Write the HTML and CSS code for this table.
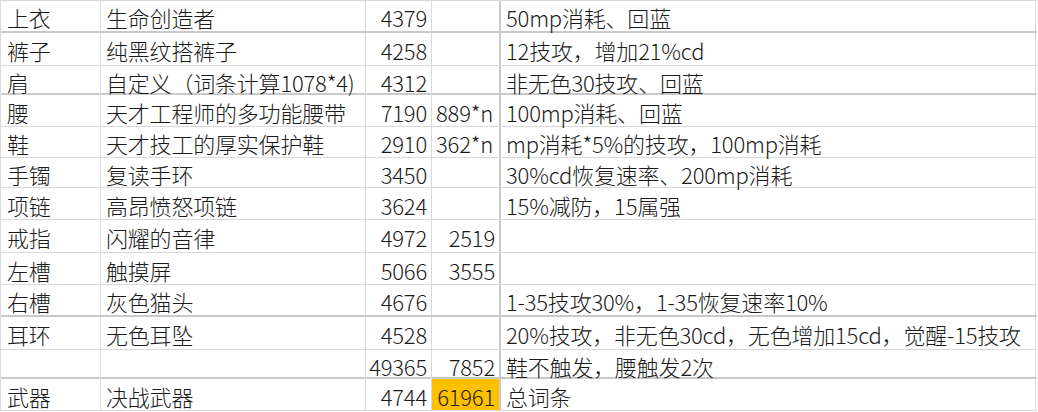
FILE: index.html
```html
<!DOCTYPE html>
<html lang="zh-CN">
<head>
<meta charset="utf-8">
<title>装备词条</title>
<link rel="stylesheet" href="styles.css">
</head>
<body>
<div class="sheet">
  <div class="row h32 thick"><div class="c c1">上衣</div><div class="c c2">生命创造者</div><div class="c c3 num">4379</div><div class="c c4"></div><div class="c c5">50mp消耗、回蓝</div></div>
  <div class="row h33"><div class="c c1">裤子</div><div class="c c2">纯黑纹搭裤子</div><div class="c c3 num">4258</div><div class="c c4"></div><div class="c c5">12技攻，增加21%cd</div></div>
  <div class="row h29 thick"><div class="c c1">肩</div><div class="c c2">自定义（词条计算1078*4)</div><div class="c c3 num">4312</div><div class="c c4"></div><div class="c c5">非无色30技攻、回蓝</div></div>
  <div class="row h32"><div class="c c1">腰</div><div class="c c2">天才工程师的多功能腰带</div><div class="c c3 num">7190</div><div class="c c4">889*n</div><div class="c c5">100mp消耗、回蓝</div></div>
  <div class="row h31"><div class="c c1">鞋</div><div class="c c2">天才技工的厚实保护鞋</div><div class="c c3 num">2910</div><div class="c c4">362*n</div><div class="c c5">mp消耗*5%的技攻，100mp消耗</div></div>
  <div class="row h30"><div class="c c1">手镯</div><div class="c c2">复读手环</div><div class="c c3 num">3450</div><div class="c c4"></div><div class="c c5">30%cd恢复速率、200mp消耗</div></div>
  <div class="row h32"><div class="c c1">项链</div><div class="c c2">高昂愤怒项链</div><div class="c c3 num">3624</div><div class="c c4"></div><div class="c c5">15%减防，15属强</div></div>
  <div class="row h33"><div class="c c1">戒指</div><div class="c c2">闪耀的音律</div><div class="c c3 num">4972</div><div class="c c4 num">2519</div><div class="c c5"></div></div>
  <div class="row h32"><div class="c c1">左槽</div><div class="c c2">触摸屏</div><div class="c c3 num">5066</div><div class="c c4 num">3555</div><div class="c c5"></div></div>
  <div class="row h32 thick"><div class="c c1">右槽</div><div class="c c2">灰色猫头</div><div class="c c3 num">4676</div><div class="c c4"></div><div class="c c5">1-35技攻30%，1-35恢复速率10%</div></div>
  <div class="row h33"><div class="c c1">耳环</div><div class="c c2">无色耳坠</div><div class="c c3 num">4528</div><div class="c c4"></div><div class="c c5">20%技攻，非无色30cd，无色增加15cd，觉醒-15技攻</div></div>
  <div class="row h29 thick"><div class="c c1"></div><div class="c c2"></div><div class="c c3 num">49365</div><div class="c c4 num">7852</div><div class="c c5">鞋不触发，腰触发2次</div></div>
  <div class="row h32"><div class="c c1">武器</div><div class="c c2">决战武器</div><div class="c c3 num">4744</div><div class="c c4 num hl">61961</div><div class="c c5">总词条</div></div>
</div>
</body>
</html>
```

FILE: styles.css
```css
html, body {
  margin: 0;
  padding: 0;
  background: #ffffff;
}

.sheet {
  width: 1036px;
  border-top: 1px solid #d9d9d9;
  border-left: 1px solid #d9d9d9;
  font-family: "Noto Sans CJK SC", "Noto Sans", sans-serif;
  font-weight: 300;
  font-size: 22px;
  color: #1a1a1a;
}

.row {
  display: grid;
  grid-template-columns: 100px 265px 66px 69px 535px;
  box-sizing: border-box;
  border-bottom: 1px solid #d9d9d9;
}

.row.thick {
  border-bottom: 2px solid #c9c9c9;
}

.h29 { height: 29px; }
.h30 { height: 30px; }
.h31 { height: 31px; }
.h32 { height: 32px; }
.h33 { height: 33px; }

.c {
  box-sizing: border-box;
  border-right: 1px solid #d9d9d9;
  padding: 2px 4px 0 5px;
  display: flex;
  align-items: center;
  white-space: nowrap;
  line-height: 28px;
  letter-spacing: -0.2px;
}

.c1 { padding-left: 6px; }

.c4 {
  border-right: 2px solid #c9c9c9;
  padding-left: 4px;
}

.num {
  justify-content: flex-end;
}

.hl {
  background: #ffc000;
}
```
